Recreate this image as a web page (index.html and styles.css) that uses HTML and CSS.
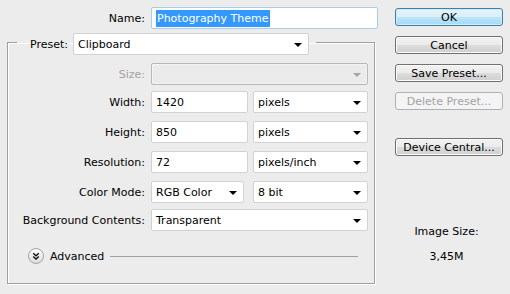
FILE: index.html
```html
<!DOCTYPE html>
<html>
<head>
<meta charset="utf-8">
<link rel="stylesheet" href="styles.css">
</head>
<body>
<div class="dialog">
  <div class="main">
    <div class="row name-row">
      <span class="label">Name:</span>
      <div class="field name-field"><span class="sel">Photography Theme</span></div>
    </div>
    <fieldset class="group">
      <legend class="legend">
        <span class="legend-label">Preset:</span>
        <div class="dropdown preset">Clipboard</div>
      </legend>
      <div class="row first">
        <span class="label disabled">Size:</span>
        <div class="dropdown full off"></div>
      </div>
      <div class="row tight">
        <span class="label">Width:</span>
        <div class="field num">1420</div>
        <div class="dropdown unit">pixels</div>
      </div>
      <div class="row">
        <span class="label">Height:</span>
        <div class="field num">850</div>
        <div class="dropdown unit">pixels</div>
      </div>
      <div class="row">
        <span class="label">Resolution:</span>
        <div class="field num">72</div>
        <div class="dropdown unit">pixels/inch</div>
      </div>
      <div class="row">
        <span class="label">Color Mode:</span>
        <div class="dropdown mode">RGB Color</div>
        <div class="dropdown unit">8 bit</div>
      </div>
      <div class="row tight">
        <span class="label">Background Contents:</span>
        <div class="dropdown full">Transparent</div>
      </div>
      <div class="advanced">
        <svg class="adv-icon" width="16" height="16" viewBox="0 0 16 16">
          <defs>
            <linearGradient id="g" x1="0" y1="0" x2="0" y2="1">
              <stop offset="0" stop-color="#ffffff"/>
              <stop offset="1" stop-color="#dcdcdc"/>
            </linearGradient>
          </defs>
          <circle cx="8" cy="8" r="7.5" fill="url(#g)" stroke="#a3a3a3"/>
          <polyline points="5.2,5.3 8,7.8 10.8,5.3" fill="none" stroke="#111" stroke-width="1.4"/>
          <polyline points="5.2,8.6 8,11.1 10.8,8.6" fill="none" stroke="#111" stroke-width="1.4"/>
        </svg>
        <span class="adv-text">Advanced</span>
        <span class="adv-line"></span>
      </div>
    </fieldset>
  </div>
  <div class="side">
    <div class="btn default">OK</div>
    <div class="btn">Cancel</div>
    <div class="btn">Save Preset...</div>
    <div class="btn dis">Delete Preset...</div>
    <div class="btn device">Device Central...</div>
    <div class="info">Image Size:</div>
    <div class="info value">3,45M</div>
  </div>
</div>
</body>
</html>
```
FILE: styles.css
```css
html, body {
  margin: 0;
  padding: 0;
}
body {
  width: 510px;
  height: 294px;
  background: #ececec;
  font-family: "DejaVu Sans", sans-serif;
  font-size: 11px;
  color: #000;
  overflow: hidden;
}
.dialog {
  display: flex;
  padding-top: 7px;
}
.main {
  margin-left: 7px;
  width: 371px;
}
.row {
  display: flex;
  align-items: center;
  height: 22px;
  margin-top: 8px;
}
.name-row {
  margin-top: 0;
}
.row.first {
  margin-top: 8px;
}
.row.tight {
  margin-top: 6px;
}
.label {
  width: 137px;
  margin-right: 6px;
  text-align: right;
  white-space: nowrap;
}
.name-row .label {
  width: 138px;
}
.label.disabled {
  color: #a3a3a3;
}
.field, .dropdown {
  box-sizing: border-box;
  height: 22px;
  background: #fff;
  border: 1px solid #d2d2d2;
  border-radius: 2px;
  padding-left: 4px;
  display: flex;
  align-items: center;
  white-space: nowrap;
}
.name-field {
  width: 227px;
  border-color: #a9cce9;
}
.sel {
  background: #3399ff;
  color: #fff;
  padding: 2px 1px;
}
.num {
  width: 97px;
  margin-right: 5px;
}
.dropdown {
  position: relative;
}
.dropdown::after {
  content: "";
  position: absolute;
  right: 6px;
  top: 9px;
  border-left: 4px solid transparent;
  border-right: 4px solid transparent;
  border-top: 4px solid #000;
}
.unit {
  width: 115px;
}
.mode {
  width: 93px;
  margin-right: 9px;
}
.full {
  width: 217px;
}
.dropdown.off {
  background: #ebebeb;
  border-color: #b8b8b8;
  box-shadow: inset 0 0 0 1px #f4f4f4;
}
.dropdown.off::after {
  border-top-color: #a6a6a6;
}
.group {
  box-sizing: border-box;
  width: 368px;
  margin: 0;
  padding: 0 0 19px 0;
  border: 1px solid #a0a0a0;
  box-shadow: 1px 1px 0 #fff, inset 1px 1px 0 #fff;
}
.legend {
  display: flex;
  align-items: center;
  margin-left: 9px;
  padding: 4px 7px 0 13px;
}
.legend-label {
  margin-right: 5px;
}
.preset {
  width: 236px;
}
.advanced {
  display: flex;
  align-items: center;
  height: 16px;
  margin-top: 17px;
  padding-left: 20px;
  margin-right: 16px;
}
.adv-icon {
  display: block;
}
.adv-text {
  margin-left: 6px;
  margin-right: 6px;
}
.adv-line {
  flex: 1;
  height: 1px;
  background: #a0a0a0;
}
.side {
  margin-left: 17px;
  width: 108px;
  padding-top: 1px;
  display: flex;
  flex-direction: column;
}
.btn {
  box-sizing: border-box;
  height: 18px;
  margin-bottom: 10px;
  border: 1px solid #707070;
  border-radius: 3px;
  background: linear-gradient(#f2f2f2 0%, #ebebeb 50%, #dddddd 50%, #cfcfcf 100%);
  box-shadow: inset 0 0 0 1px #fbfbfb;
  display: flex;
  align-items: center;
  justify-content: center;
  white-space: nowrap;
}
.btn.default {
  border-color: #3c7fb1;
  background: linear-gradient(#e5f4fc 0%, #d9effa 50%, #bde4f8 50%, #a7d9f5 100%);
  box-shadow: inset 0 0 0 1px #d0ecfb;
}
.btn.dis {
  border-color: #adb2b5;
  background: #f4f4f4;
  box-shadow: none;
  color: #a3a3a3;
}
.btn.device {
  margin-top: 18px;
}
.info {
  text-align: center;
  padding-right: 5px;
  line-height: 14px;
}
.btn + .info {
  margin-top: 59px;
}
.info.value {
  margin-top: 11px;
}
```
